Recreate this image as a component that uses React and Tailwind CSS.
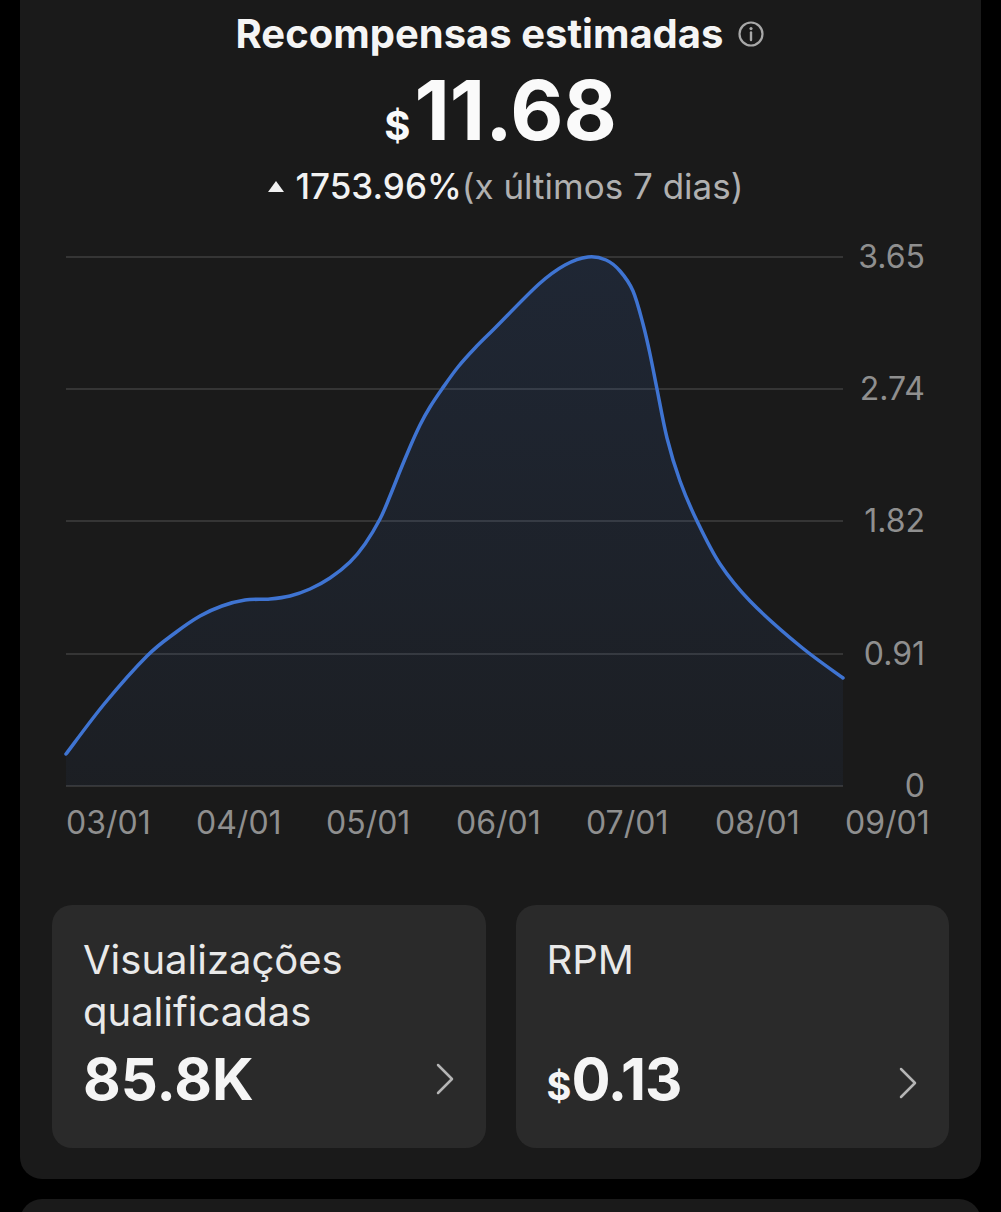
import React from "react";

const PTS = [
  [66, 753], [105, 702], [147, 655], [175, 632], [200, 615], [222, 605], [245, 599], [270, 598],
  [290, 595], [310, 588], [330, 577], [350, 561], [365, 543], [380, 518], [390, 495], [400, 470],
  [410, 446], [420, 424], [430, 406], [442, 388], [458, 366], [475, 347], [495, 327], [539, 283],
  [565, 264], [588, 256], [606, 259], [620, 270], [633, 290], [643, 323], [650, 353], [657, 388],
  [667, 437], [680, 480], [697, 520], [720, 563], [750, 600], [800, 645], [843, 677],
];

function smoothPath(pts) {
  let d = `M ${pts[0][0]} ${pts[0][1]}`;
  for (let i = 0; i < pts.length - 1; i++) {
    const p0 = pts[i - 1] || pts[i];
    const p1 = pts[i];
    const p2 = pts[i + 1];
    const p3 = pts[i + 2] || p2;
    const c1x = p1[0] + (p2[0] - p0[0]) / 6;
    const c1y = p1[1] + (p2[1] - p0[1]) / 6;
    const c2x = p2[0] - (p3[0] - p1[0]) / 6;
    const c2y = p2[1] - (p3[1] - p1[1]) / 6;
    d += ` C ${c1x.toFixed(1)} ${c1y.toFixed(1)} ${c2x.toFixed(1)} ${c2y.toFixed(1)} ${p2[0]} ${p2[1]}`;
  }
  return d;
}

const GRID = [
  { y: 256, label: "3.65" },
  { y: 388, label: "2.74" },
  { y: 520, label: "1.82" },
  { y: 653, label: "0.91" },
  { y: 785, label: "0" },
];

const XLABELS = [
  [66, "03/01"], [196, "04/01"], [326, "05/01"], [456, "06/01"], [586, "07/01"], [715, "08/01"], [845, "09/01"],
];

function Chart() {
  const line = smoothPath(PTS);
  const area = `${line} L 843 785 L 66 785 Z`;
  return (
    <svg className="block" width="897" height="645" viewBox="52 205 897 645">
      <defs>
        <linearGradient id="fillg" x1="0" y1="0" x2="0" y2="1">
          <stop offset="0%" stopColor="#3e74d4" stopOpacity="0.14" />
          <stop offset="100%" stopColor="#3e74d4" stopOpacity="0.05" />
        </linearGradient>
      </defs>
      {GRID.map((g) => (
        <line key={g.label} x1="66" x2="843" y1={g.y} y2={g.y} stroke="#3f3f3f" strokeWidth="1.5" />
      ))}
      <path d={area} fill="url(#fillg)" />
      <path d={line} fill="none" stroke="#3f74d2" strokeWidth="3.5" strokeLinecap="round" strokeLinejoin="round" />
      {GRID.map((g) => (
        <text key={g.label} x="925" y={g.y + 11} textAnchor="end" fill="#8f8f8f" fontSize="32" fontFamily="Inter, sans-serif">
          {g.label}
        </text>
      ))}
      {XLABELS.map(([x, t]) => (
        <text key={t} x={x} y="833" fill="#8f8f8f" fontSize="32" fontFamily="Inter, sans-serif">
          {t}
        </text>
      ))}
    </svg>
  );
}

function Chevron() {
  return (
    <svg width="20" height="32" viewBox="0 0 20 32" className="shrink-0">
      <polyline points="3,2 17,16 3,30" fill="none" stroke="#b5b5b5" strokeWidth="2.5" strokeLinecap="round" strokeLinejoin="round" />
    </svg>
  );
}

function StatCard({ label, children }) {
  return (
    <div className="bg-[#2a2a2a] rounded-[20px] h-[243px] pl-[31px] pr-[31px] pt-[29px]">
      <div className="h-[104px] text-[40px] leading-[52px] text-[#e9e9e9]">{label}</div>
      <div className="mt-[11px] flex items-center justify-between">
        <div className="flex items-baseline font-bold text-[#f5f5f5] leading-[60px]">{children}</div>
        <Chevron />
      </div>
    </div>
  );
}

export default function App() {
  return (
    <div className="min-h-screen bg-black overflow-hidden" style={{ fontFamily: "Inter, 'Noto Sans', sans-serif" }}>
      <div className="mx-[20px] bg-[#1a1a1a] rounded-b-[22px] pt-[11px] pb-[31px] px-[32px]">
        <div className="flex items-center justify-center gap-[14px] h-[46px]">
          <span className="text-[40px] leading-[46px] font-bold text-[#f5f5f5]">Recompensas estimadas</span>
          <svg width="28" height="28" viewBox="0 0 28 28">
            <circle cx="14" cy="14" r="11.5" fill="none" stroke="#a8a8a8" strokeWidth="2.2" />
            <circle cx="14" cy="8.6" r="1.6" fill="#a8a8a8" />
            <line x1="14" y1="12.5" x2="14" y2="20" stroke="#a8a8a8" strokeWidth="2.4" strokeLinecap="round" />
          </svg>
        </div>
        <div className="mt-[14px] flex items-baseline justify-center leading-[80px] font-bold text-[#fafafa]">
          <span className="text-[40px] mr-[4px]">$</span>
          <span className="text-[82px]">11.68</span>
        </div>
        <div className="flex items-center justify-center h-[40px] pl-[10px]">
          <svg width="16" height="11" viewBox="0 0 16 11" className="mr-[12px]">
            <polygon points="8,0 16,11 0,11" fill="#f0f0f0" />
          </svg>
          <span className="text-[35px] leading-[40px] font-medium text-[#f2f2f2]">1753.96%</span>
          <span className="text-[35px] leading-[40px] text-[#b0b0b0]">(x últimos 7 dias)</span>
        </div>
        <Chart />
        <div className="mt-[54px] grid grid-cols-2 gap-[30px]">
          <StatCard label={<>Visualizações<br />qualificadas</>}>
            <span className="text-[58px]">85.8K</span>
          </StatCard>
          <StatCard label="RPM">
            <span className="text-[38px]">$</span>
            <span className="text-[58px] tracking-[-1px]">0.13</span>
          </StatCard>
        </div>
      </div>
      <div className="mt-[20px] mx-[20px] h-[60px] bg-[#1a1a1a] rounded-t-[22px]" />
    </div>
  );
}
